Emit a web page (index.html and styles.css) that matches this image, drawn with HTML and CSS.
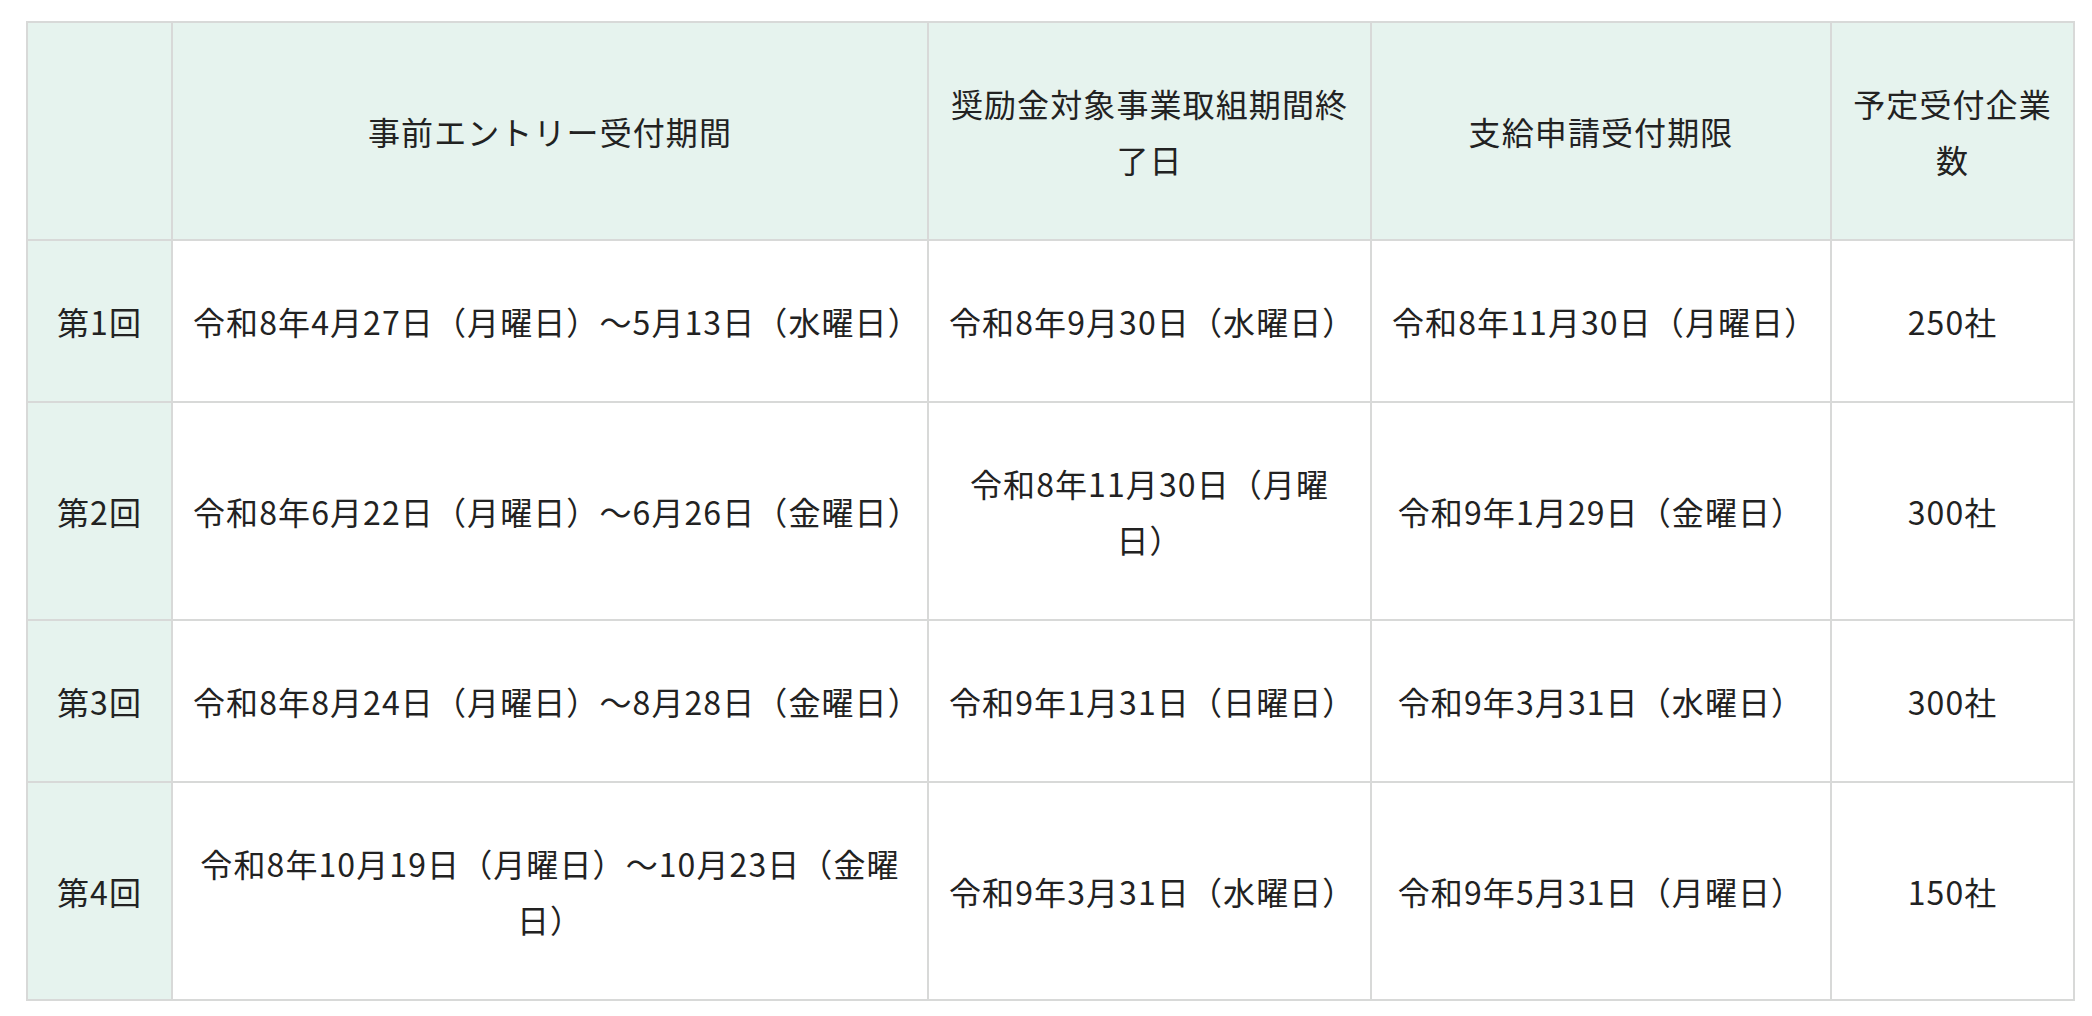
FILE: index.html
```html
<!DOCTYPE html>
<html lang="ja">
<head>
<meta charset="utf-8">
<title>スケジュール</title>
<link rel="stylesheet" href="styles.css">
</head>
<body>
<div class="wrap">
<table class="schedule">
  <colgroup>
    <col class="c-round">
    <col class="c-entry">
    <col class="c-end">
    <col class="c-apply">
    <col class="c-count">
  </colgroup>
  <thead>
    <tr>
      <th></th>
      <th>事前エントリー受付期間</th>
      <th>奨励金対象事業取組期間終了日</th>
      <th>支給申請受付期限</th>
      <th>予定受付企業数</th>
    </tr>
  </thead>
  <tbody>
    <tr>
      <th class="row-head">第1回</th>
      <td>令和8年4月27日（月曜日）〜5月13日（水曜日）</td>
      <td>令和8年9月30日（水曜日）</td>
      <td>令和8年11月30日（月曜日）</td>
      <td>250社</td>
    </tr>
    <tr>
      <th class="row-head">第2回</th>
      <td>令和8年6月22日（月曜日）〜6月26日（金曜日）</td>
      <td>令和8年11月30日（月曜日）</td>
      <td>令和9年1月29日（金曜日）</td>
      <td>300社</td>
    </tr>
    <tr>
      <th class="row-head">第3回</th>
      <td>令和8年8月24日（月曜日）〜8月28日（金曜日）</td>
      <td>令和9年1月31日（日曜日）</td>
      <td>令和9年3月31日（水曜日）</td>
      <td>300社</td>
    </tr>
    <tr>
      <th class="row-head">第4回</th>
      <td>令和8年10月19日（月曜日）〜10月23日（金曜日）</td>
      <td>令和9年3月31日（水曜日）</td>
      <td>令和9年5月31日（月曜日）</td>
      <td>150社</td>
    </tr>
  </tbody>
</table>
</div>
</body>
</html>
```
FILE: styles.css
```css
html, body {
  margin: 0;
  padding: 0;
  background: #ffffff;
}

body {
  font-family: "Noto Sans CJK JP", "Noto Sans", sans-serif;
  color: #222222;
}

.wrap {
  padding: 21px 0 0 26px;
}

.schedule {
  border-collapse: collapse;
  table-layout: fixed;
  width: 2047px;
  font-size: 32px;
  line-height: 56px;
  letter-spacing: 1.1px;
}

.c-round { width: 145px; }
.c-entry { width: 756px; }
.c-end { width: 443px; }
.c-apply { width: 460px; }
.c-count { width: 243px; }

.schedule th,
.schedule td {
  border: 2px solid #d8d9d8;
  padding: 52px 20px;
  text-align: center;
  vertical-align: middle;
  font-weight: 400;
}

.schedule thead th {
  background: #e6f3ee;
}

.schedule .row-head {
  background: #e6f3ee;
  padding-left: 10px;
  padding-right: 10px;
}
```
